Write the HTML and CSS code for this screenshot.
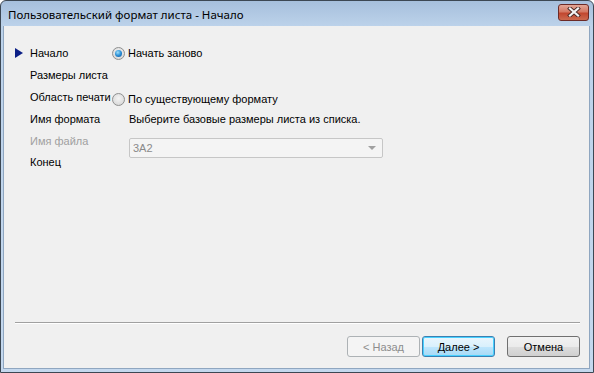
FILE: index.html
```html
<!DOCTYPE html>
<html lang="ru">
    <head>
        <meta charset="UTF-8">
        <title>Пользовательский формат листа - Начало</title>
    <link rel="stylesheet" href="styles.css">
    </head>
    <body>
        <div class="window">
            <div class="titlebar">
                <span class="title">Пользовательский формат листа - Начало</span>
                <div class="close-btn">
                    <svg width="16" height="10" viewBox="0 0 16 10">
                        <path d="M4 1.5 L12 8.5 M12 1.5 L4 8.5" stroke="#4a2a26" stroke-width="4" stroke-linecap="square"/>
                        <path d="M4 1.5 L12 8.5 M12 1.5 L4 8.5" stroke="#f4f4f4" stroke-width="2.2" stroke-linecap="square"/>
                    </svg>
                </div>
            </div>
            <div class="client">
                <div class="content">
                    <ul class="steps">
                        <li class="step current">Начало</li>
                        <li class="step">Размеры листа</li>
                        <li class="step">Область печати</li>
                        <li class="step">Имя формата</li>
                        <li class="step disabled">Имя файла</li>
                        <li class="step">Конец</li>
                    </ul>
                    <div class="page">
                        <label class="radio">
                            <span class="radio-dot checked"></span>
                            Начать заново
                        </label>
                        <label class="radio second">
                            <span class="radio-dot"></span>
                            По существующему формату
                        </label>
                        <div class="hint">Выберите базовые размеры листа из списка.</div>
                        <div class="combo">
                            <span class="combo-text">3A2</span>
                            <span class="combo-arrow"></span>
                        </div>
                    </div>
                </div>
                <div class="separator"></div>
                <div class="buttons">
                    <button class="btn" disabled>&lt; Назад</button>
                    <button class="btn default">Далее &gt;</button>
                    <button class="btn cancel">Отмена</button>
                </div>
            </div>
        </div>
    </body>
</html>
```

FILE: styles.css
```css
html, body {
    margin: 0;
    padding: 0;
    background: #ffffff;
}

.window {
    width: 592px;
    height: 371px;
    border: 1px solid #3c4753;
    border-radius: 6px 6px 0 0;
    background: linear-gradient(to bottom, #a6bfdc 0px, #bcd2ea 25px, #c4d8ee 100%);
    display: flex;
    flex-direction: column;
    overflow: hidden;
}

/* Title bar */

.titlebar {
    height: 25px;
    display: flex;
    align-items: center;
    padding: 0 4px 0 7px;
}

.title {
    font-family: "Noto Sans", "DejaVu Sans", sans-serif;
    font-size: 11.5px;
    color: #000000;
    flex: 1;
    margin-top: 1px;
}

.close-btn {
    width: 29px;
    height: 15px;
    border: 1px solid #6c2a26;
    border-radius: 3px;
    background: linear-gradient(to bottom, #e3a797 0%, #d47863 45%, #c2472f 55%, #cc6a4f 100%);
    display: flex;
    align-items: center;
    justify-content: center;
    margin-top: -3px;
}

/* Client area */

.client {
    flex: 1;
    margin: 0 3px 3px 2px;
    background: #f0f0f0;
    border: 1px solid #8fa6c0;
    border-top: none;
    display: flex;
    flex-direction: column;
    font-family: "Liberation Sans", Arial, sans-serif;
    font-size: 11px;
    color: #000000;
}

.content {
    flex: 1;
    display: flex;
    padding: 20px 0 0 10px;
}

.steps {
    list-style: none;
    margin: 0;
    padding: 0;
    width: 98px;
}

.step {
    height: 22px;
    line-height: 14px;
    padding-left: 16px;
    position: relative;
}

.step.current::before {
    content: "";
    position: absolute;
    left: 1px;
    top: 2px;
    border-left: 8px solid #0b1f86;
    border-top: 5px solid transparent;
    border-bottom: 5px solid transparent;
}

.step.disabled {
    color: #a0a0a0;
    height: 21px;
}

.page {
    display: flex;
    flex-direction: column;
}

.radio {
    display: flex;
    align-items: center;
    gap: 3px;
    height: 14px;
}

.radio.second {
    margin-top: 32px;
}

.radio-dot {
    width: 11px;
    height: 11px;
    border: 1px solid #8e8f8f;
    border-radius: 50%;
    background: radial-gradient(circle at 50% 40%, #f4f4f4 0%, #dcdcdc 70%, #cfcfcf 100%);
    position: relative;
}

.radio-dot.checked::after {
    content: "";
    position: absolute;
    left: 2px;
    top: 2px;
    width: 7px;
    height: 7px;
    border-radius: 50%;
    background: radial-gradient(circle at 40% 35%, #9fe0fa 0%, #2a8fd6 50%, #0d4f9a 100%);
}

.hint {
    margin: 6px 0 0 17px;
    height: 14px;
    line-height: 14px;
}

.combo {
    margin: 12px 0 0 17px;
    width: 243px;
    height: 18px;
    border: 1px solid #c6c6c6;
    border-radius: 2px;
    background: #f4f4f4;
    display: flex;
    align-items: center;
    justify-content: space-between;
    padding: 0 6px 0 3px;
}

.combo-text {
    color: #8a8a8a;
}

.combo-arrow {
    border-top: 4px solid #a0a0a0;
    border-left: 4px solid transparent;
    border-right: 4px solid transparent;
}

.separator {
    height: 0;
    border-top: 1px solid #a0a0a0;
    border-bottom: 1px solid #ffffff;
    margin: 0 9px 0 11px;
}

.buttons {
    display: flex;
    justify-content: flex-end;
    gap: 2px;
    padding: 12px 9px 11px 0;
}

.btn {
    width: 73px;
    height: 21px;
    font-family: "Liberation Sans", Arial, sans-serif;
    font-size: 11px;
    color: #000000;
    border: 1px solid #707070;
    border-radius: 3px;
    background: linear-gradient(to bottom, #f2f2f2 0%, #ebebeb 50%, #dddddd 51%, #cfcfcf 100%);
    padding: 0;
}

.btn:disabled {
    color: #8d8d8d;
    border-color: #adb2b5;
    background: #f4f4f4;
}

.btn.default {
    border-color: #3c7fb1;
    box-shadow: inset 0 0 0 1px #48d1ff;
    background: linear-gradient(to bottom, #eaf6fd 0%, #d9f0fc 50%, #bee6fd 51%, #a7d9f5 100%);
}

.btn.cancel {
    margin-left: 10px;
}
```
